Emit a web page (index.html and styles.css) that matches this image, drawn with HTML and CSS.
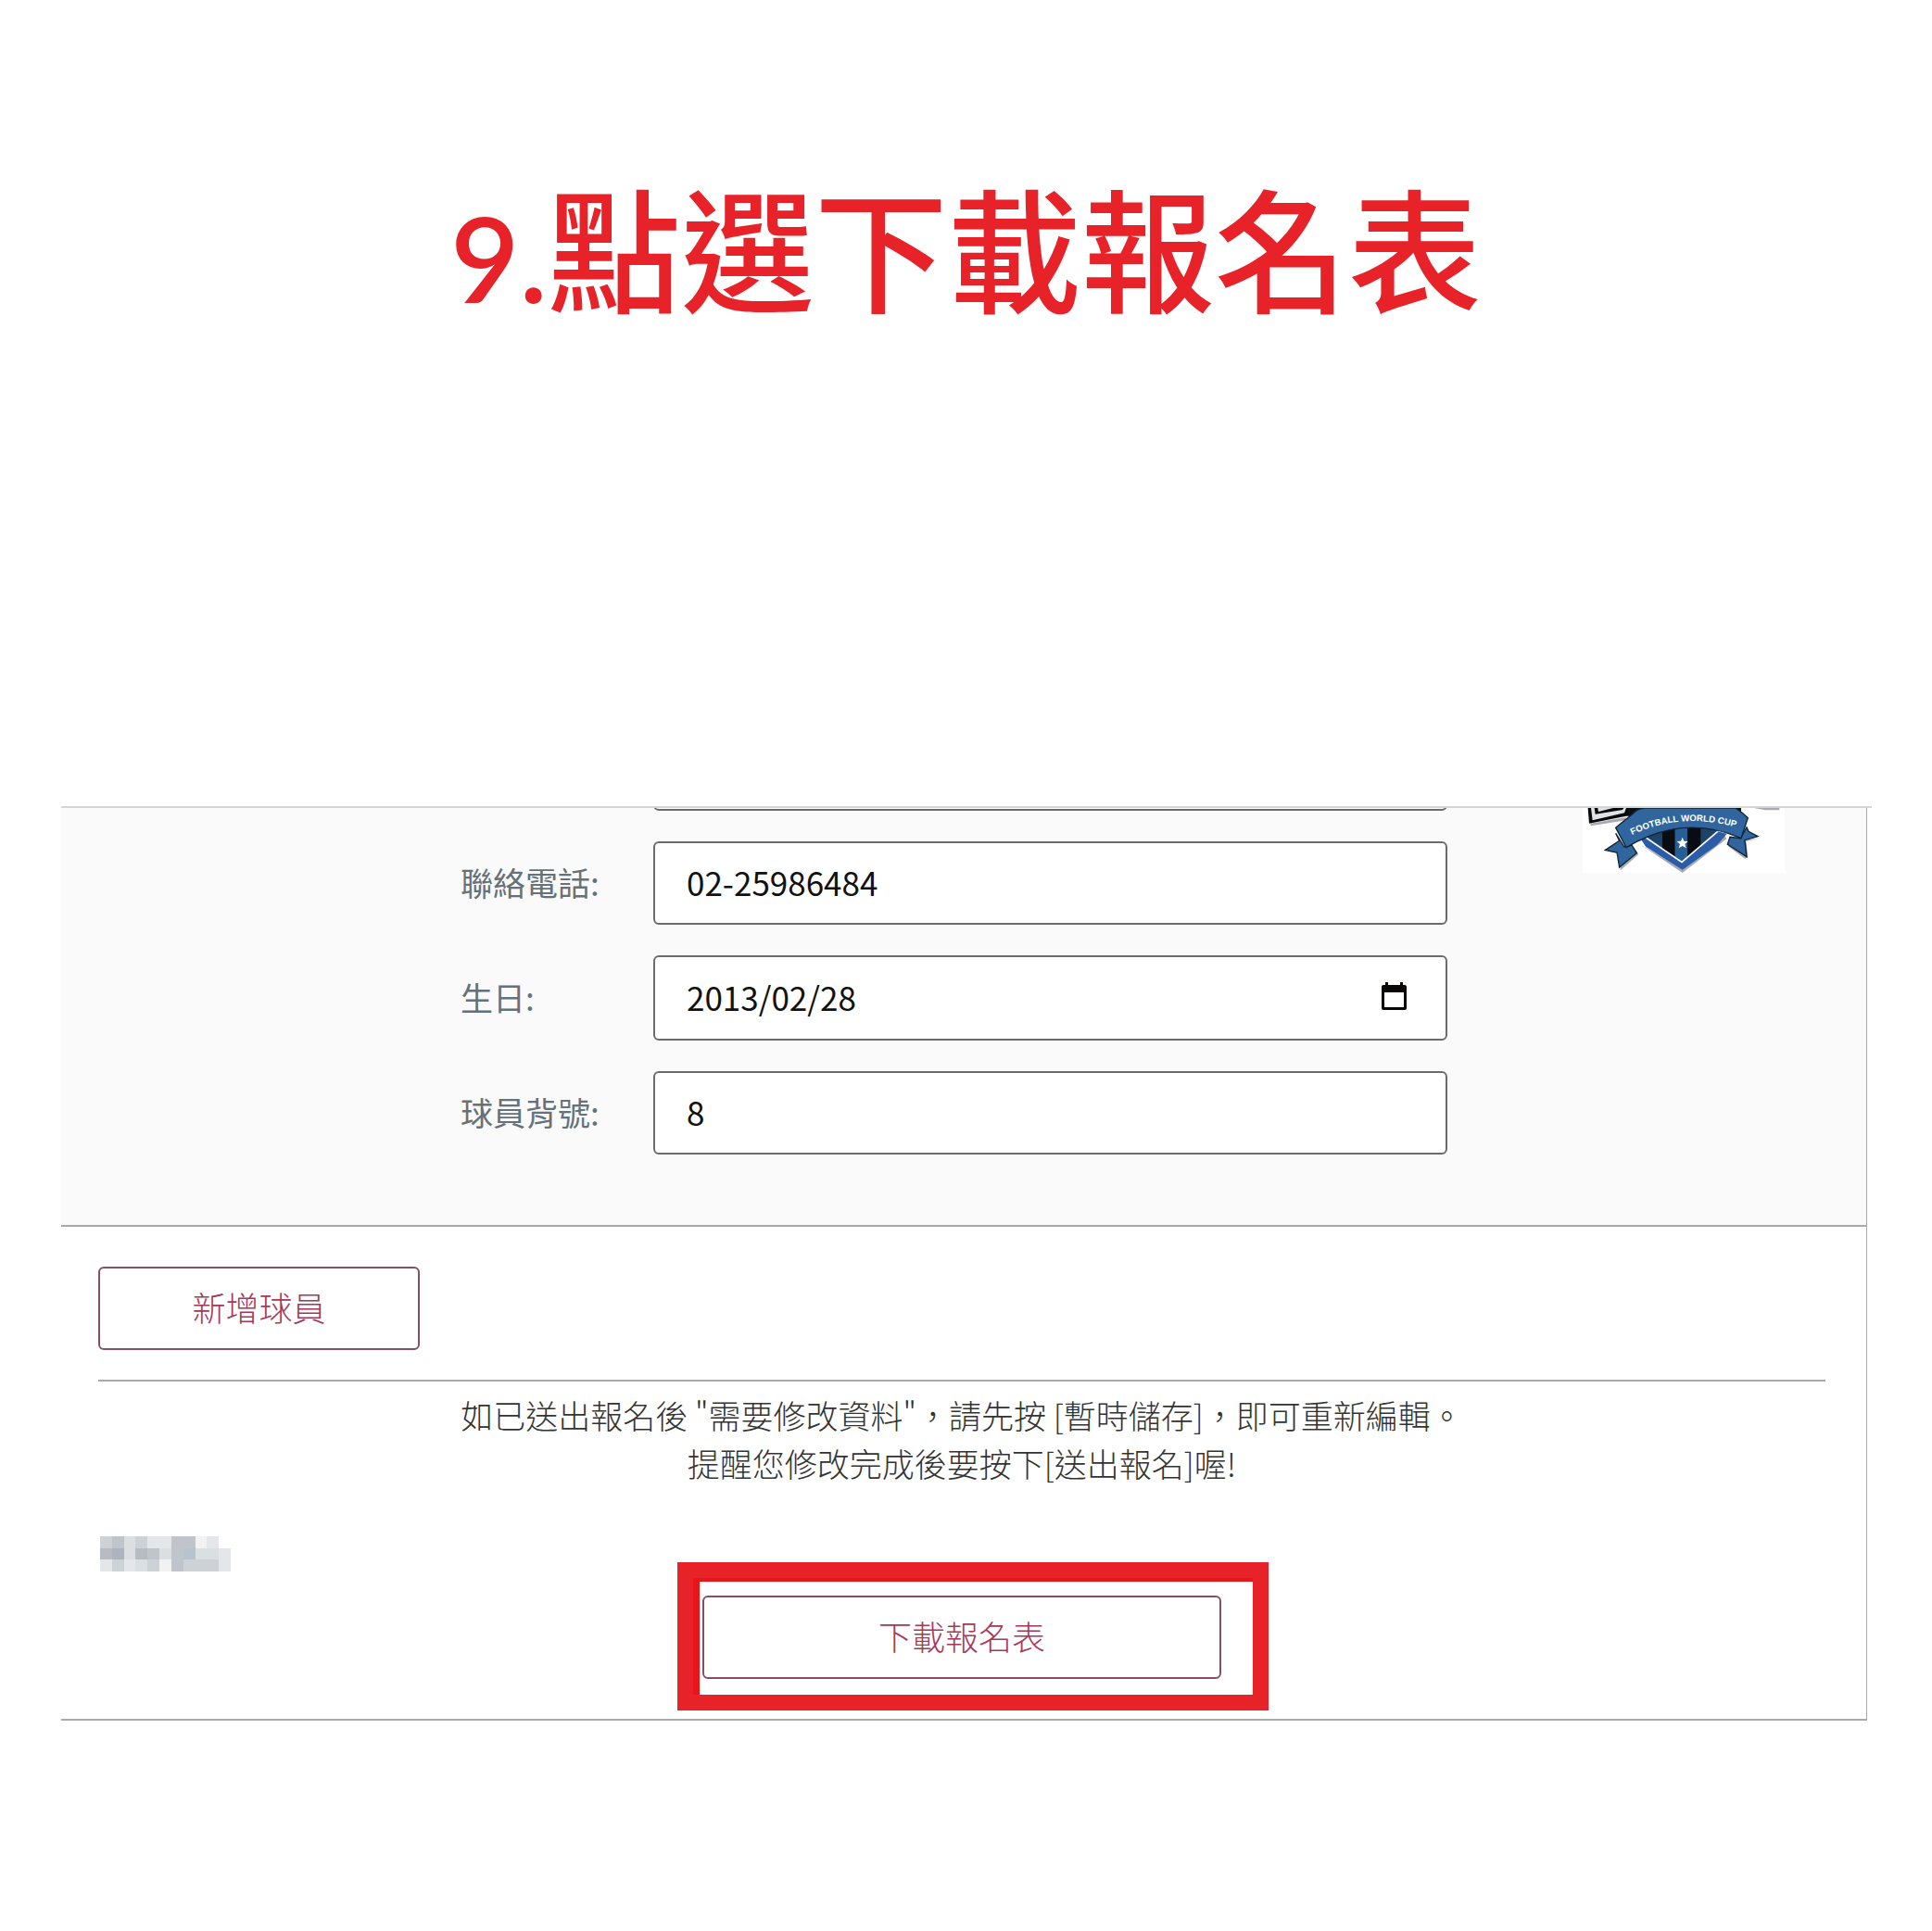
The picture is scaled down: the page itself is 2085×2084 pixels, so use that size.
FILE: index.html
```html
<!DOCTYPE html>
<html lang="zh-Hant">
<head>
    <meta charset="UTF-8">
    <meta name="viewport" content="width=device-width, initial-scale=1.0">
    <title>下載報名表</title>
    <link rel="stylesheet" href="styles.css">
</head>
<body>

    <h1><span class="step">9.</span>點選下載報名表</h1>

    <div class="window">
        <form class="panel">
            <!-- Player data -->
            <div class="player">
                <div class="fields">
                    <input class="scrolled" type="text" aria-label="球員姓名">

                    <div class="row">
                        <label for="phone">聯絡電話:</label>
                        <input type="text" id="phone" value="02-25986484">
                    </div>
                    <div class="row">
                        <label for="birthday">生日:</label>
                        <div class="date-box">
                            <input type="text" id="birthday" value="2013/02/28">
                            <svg class="calendar" viewBox="0 0 27 30" aria-hidden="true">
                                <path d="M4 0h3v3h13V0h3v3h2a2 2 0 0 1 2 2v23a2 2 0 0 1-2 2H2a2 2 0 0 1-2-2V5a2 2 0 0 1 2-2h2zM3 11v16h21V11z" fill="#0a0606" fill-rule="evenodd"/>
                            </svg>
                        </div>
                    </div>
                    <div class="row">
                        <label for="number">球員背號:</label>
                        <input type="text" id="number" value="8">
                    </div>
                </div>

                <!-- Cup badge -->
                <svg class="logo" viewBox="85 66 654 210" role="img" aria-label="Football World Cup">
                    <rect x="85" y="66" width="654" height="210" fill="#fff"/>
                    <g fill="#a9a9b2">
                        <path d="M110 116L225 96v10L112 124zM640 66h82v7h-46z"/>
                        <path d="M272 184L408 262 545 156l6 10-143 110zM166 206l34 6 8 56 58-52-10-16zM556 190l54 40 10-4-6-56 46-8z"/>
                    </g>
                    <path d="M102 66H330v26L226 92l-120 24z" fill="#07090b"/>
                    <path d="M112 66h11l3 20 88-14 4-6h8l-6 16-103 24zM134 66h50l-48 12z" fill="#dfe3e6"/>
                    <path d="M228 66h370v50H240z" fill="#0a1016"/>
                    <path d="M262 150Q405 100 552 150L520 186 408 266 290 192z" fill="#2b5ca8"/>
                    <path d="M288 156Q405 105 524 140L408 236z" fill="#1d4467"/>
                    <path d="M343 130h41v96l-41-26zM424 128h43v66l-43 32z" fill="#090d12"/>
                    <path d="M384 124h40v102l-16 10-24-12z" fill="#265f96"/>
                    <path d="M290 162L406 241 522 142" fill="none" stroke="#fff" stroke-width="5"/>
                    <path d="M408 161l5 12 13 1-10 9 4 13-12-7-12 7 4-13-10-9 13-1z" fill="#fff"/>
                    <g fill="#31659e" stroke="#0f2334" stroke-width="4">
                        <path d="M192 148L204 172 158 202 196 210 204 258 260 212 244 186 220 192z"/>
                        <path d="M616 128L622 142 652 158 610 170 616 224 554 184 562 160 596 164z"/>
                        <path d="M192 130L248 84Q258 70 285 66H580Q604 82 620 98L598 164Q410 82 226 194z"/>
                    </g>
                    <path id="ribbon" d="M245 153Q405 76 590 131" fill="none"/>
                    <text class="ribbon-text"><textPath href="#ribbon">FOOTBALL WORLD CUP</textPath></text>
                </svg>
            </div>

            <!-- Actions -->
            <div class="actions">
                <button type="button" class="add">新增球員</button>
                <hr>
                <p class="notice">如已送出報名後 "需要修改資料"，請先按 [暫時儲存]，即可重新編輯。<br>提醒您修改完成後要按下[送出報名]喔!</p>

                <svg class="mosaic" viewBox="0 0 11 3" preserveAspectRatio="none" shape-rendering="crispEdges" aria-hidden="true">
                    <g fill="#cdd2d6"><path d="M0 0h1v1H0zM3 0h1v1H3zM1 2h1v1H1zM4 2h1v1H4zM7 2h3v1H7z"/></g>
                    <g fill="#c0c4cb"><path d="M1 0h1v1H1zM6 0h1v2H6zM7 0h1v1H7zM6 2h1v1H6zM4 1h1v1H4z"/></g>
                    <g fill="#b6bcc2"><path d="M0 1h1v1H0zM3 1h1v1H3z"/></g>
                    <g fill="#acb4c0"><path d="M1 1h1v1H1z"/></g>
                    <g fill="#b7c3cd"><path d="M7 1h1v1H7z"/></g>
                    <g fill="#dadfe1"><path d="M2 0h1v1H2zM2 1h1v1H2zM3 2h1v1H3zM5 1h1v1H5zM8 1h2v1H8z"/></g>
                    <g fill="#e4e7ea"><path d="M4 0h2v1H4zM0 2h1v1H0zM2 2h1v1H2zM10 1h1v2h-1zM9 0h1v1H9z"/></g>
                    <g fill="#f1f2f2"><path d="M5 2h1v1H5zM8 0h1v1H8z"/></g>
                </svg>

                <div class="download">
                    <button type="button">下載報名表</button>
                    <div class="highlight"></div>
                </div>
            </div>
        </form>
    </div>

</body>
</html>
```
FILE: styles.css
```css
* {
    box-sizing: border-box;
}
body {
    margin: 0;
    background-color: #fff;
    font-family: "Noto Sans CJK TC", sans-serif;
    font-size: 35px;
}
h1 {
    margin: 0;
    padding: 159px 0 501px;
    text-align: center;
    font-size: 144px;
    font-weight: 500;
    line-height: 210px;
    color: #e72228;
}
.step {
    font-family: Lato, sans-serif;
    font-size: 128px;
    font-weight: 600;
    line-height: 1;
}
.window {
    margin: 0 65px 0 66px;
    border-top: 2px solid #d6d6d6;
}
.panel {
    margin-right: 5px;
    border-right: 1px solid #a9a9a9;
    border-bottom: 2px solid #a9a9a9;
    overflow: hidden;
}

/* Player data */
.player {
    display: grid;
    grid-template-columns: 431fr 1065fr 452fr;
    padding-bottom: 76px;
    background-color: #fafafa;
    border-bottom: 2px solid #a9a9a9;
}
.fields {
    grid-column: 2;
    display: flex;
    flex-direction: column;
    gap: 33px;
}
.row {
    display: flex;
    align-items: center;
}
label {
    flex: 0 0 208px;
    padding-bottom: 2px;
    line-height: 52px;
    color: #65727b;
}
input {
    width: 100%;
    height: 90px;
    padding: 0 34px 4px;
    border: 2px solid #6b6b6b;
    border-radius: 6px;
    background-color: #fff;
    color: #111;
    font-family: inherit;
    font-size: 35px;
}
/* Field that is scrolled away under the top edge */
.scrolled {
    width: auto;
    margin: -87px 0 0 208px;
}
.date-box {
    position: relative;
    flex: 1;
}
.date-box input {
    display: block;
    height: 92px;
}
.calendar {
    position: absolute;
    top: 29px;
    right: 44px;
    width: 27px;
    height: 30px;
}
.logo {
    width: 218px;
    height: 70px;
    margin-left: 146px;
}
.ribbon-text {
    fill: #fff;
    font-family: "Liberation Sans", sans-serif;
    font-size: 29px;
    font-weight: bold;
}

/* Actions */
.actions {
    padding: 43px 44px 43px 40px;
}
button {
    display: block;
    height: 90px;
    padding: 0 0 4px;
    border: 2px solid #845068;
    border-radius: 6px;
    background-color: #fff;
    color: #a8385a;
    font-family: inherit;
    font-size: 36px;
    font-weight: 300;
    cursor: pointer;
}
.add {
    width: 347px;
}
hr {
    height: 2px;
    margin: 32px 0 10px;
    border: none;
    background-color: #a9a9a9;
}
.notice {
    margin: 0;
    text-align: center;
    font-weight: 300;
    line-height: 52px;
    color: #333;
}
.mosaic {
    display: block;
    width: 141px;
    height: 38px;
    margin: 53px 0 26px 2px;
}
.download {
    position: relative;
    width: 560px;
    margin: 0 auto;
}
.download button {
    width: 100%;
}
/* Red frame drawn over the button area */
.highlight {
    position: absolute;
    inset: -36px -51px -34px -27px;
    border: 17px solid #e72228;
    box-shadow: inset 7px 4px 0 #e8151b;
    pointer-events: none;
}
```
